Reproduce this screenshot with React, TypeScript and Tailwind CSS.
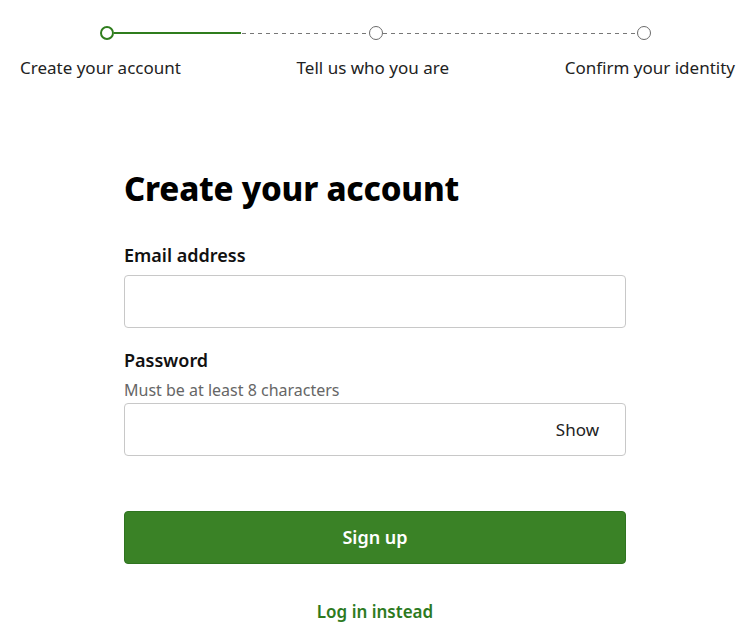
const steps = [
  { label: "Create your account" },
  { label: "Tell us who you are" },
  { label: "Confirm your identity" },
];

const Dot = ({ active }: { active?: boolean }) => (
  <div
    className={
      active
        ? "h-[14px] w-[14px] shrink-0 rounded-full border-[2.5px] border-[#2f7d1d] bg-white"
        : "h-[14px] w-[14px] shrink-0 rounded-full border-[1.5px] border-[#6b6b6b] bg-white"
    }
  />
);

const Dashes = ({ children }: { children?: React.ReactNode }) => (
  <div className="relative h-px flex-1 bg-[repeating-linear-gradient(to_right,#777_0_4px,transparent_4px_8px)]">
    {children}
  </div>
);

const Stepper = () => (
  <div className="pt-[26px]">
    {/* track */}
    <div className="flex items-center pl-[100px] pr-[99px]">
      <Dot active />
      <Dashes>
        <div className="absolute left-0 top-[-0.5px] h-[1.5px] w-[127px] bg-[#2f7d1d]" />
      </Dashes>
      <Dot />
      <Dashes />
      <Dot />
    </div>
    {/* labels */}
    <div className="mt-[17px] flex justify-between pl-[20px] pr-[15px] text-[17px] leading-[22px] text-[#222]">
      {steps.map((s) => (
        <span key={s.label}>{s.label}</span>
      ))}
    </div>
  </div>
);

export default function App() {
  return (
    <div
      className="min-h-[636px] bg-white text-[#111]"
      style={{ fontFamily: '"Noto Sans", "Open Sans", sans-serif' }}
    >
      <Stepper />

      <form className="mx-auto mt-[90px] w-[502px]" onSubmit={(e) => e.preventDefault()}>
        <h1 className="text-[33px] font-extrabold leading-[40px] tracking-[-0.2px] text-black">
          Create your account
        </h1>

        <label className="mt-[35px] block text-[18px] font-semibold leading-[22px] text-[#111]">
          Email address
        </label>
        <input
          type="email"
          className="mt-[9px] block h-[53px] w-full rounded-[4px] border border-[#c8c8c8] px-3 text-[16px] outline-none"
        />

        <label className="mt-[21px] block text-[18px] font-semibold leading-[22px] text-[#111]">
          Password
        </label>
        <p className="mt-[9px] text-[16px] leading-[20px] text-[#666]">
          Must be at least 8 characters
        </p>
        <div className="mt-[3px] flex h-[53px] items-center rounded-[4px] border border-[#c8c8c8]">
          <input type="password" className="h-full flex-1 bg-transparent px-3 text-[16px] outline-none" />
          <button type="button" className="pr-[26px] text-[17px] text-[#222]">
            Show
          </button>
        </div>

        <button
          type="submit"
          className="mt-[55px] flex h-[53px] w-full items-center justify-center rounded-[4px] border border-[#2f7420] bg-[#3a8226] text-[18px] font-semibold text-white"
        >
          Sign up
        </button>

        <div className="mt-[35px] text-center">
          <a href="#" className="text-[17px] font-semibold text-[#2d7a1e]">
            Log in instead
          </a>
        </div>
      </form>
    </div>
  );
}
